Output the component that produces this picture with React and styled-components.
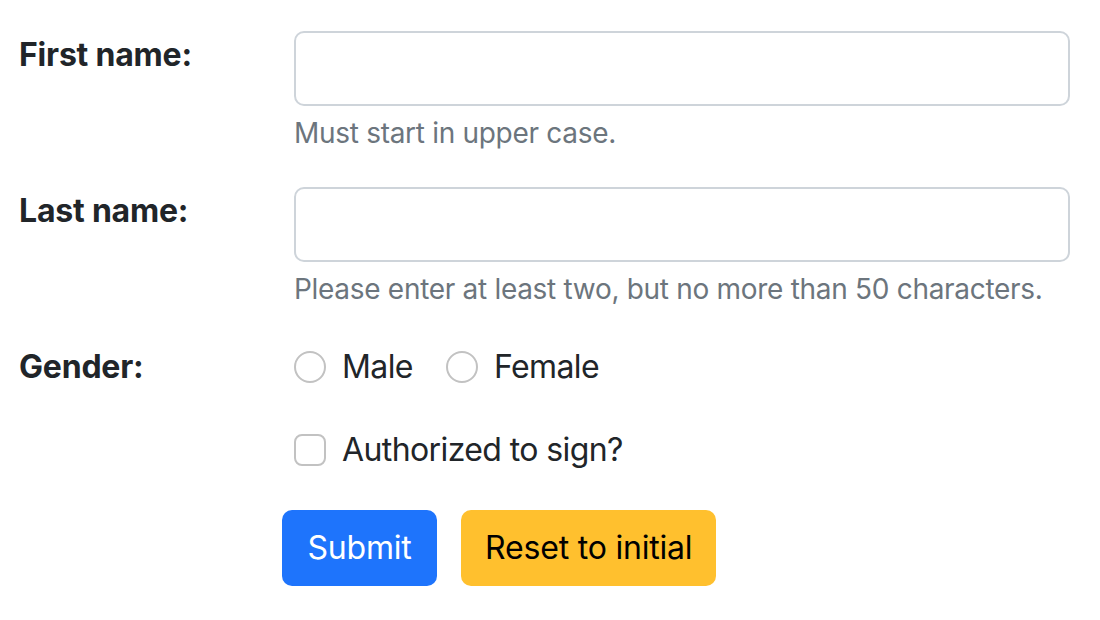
import styled, { createGlobalStyle } from "styled-components";

const GlobalStyle = createGlobalStyle`
  body {
    margin: 0;
    background: #fff;
    color: #212529;
    font-family: Inter, "Liberation Sans", sans-serif;
  }
`;

const Formulario = styled.form`
  padding: 31px 30px 0 19px;
`;

const Linha = styled.div`
  display: grid;
  grid-template-columns: 275px 1fr;
  margin-bottom: ${(p) => p.$gap || 31}px;
`;

const Rotulo = styled.label`
  font-size: 32px;
  font-weight: 700;
  line-height: 47px;
  letter-spacing: -0.2px;
`;

const Campo = styled.input`
  display: block;
  box-sizing: border-box;
  width: 100%;
  height: 75px;
  border: 2px solid #ced4da;
  border-radius: 10px;
  background: #fff;
  font-size: 32px;
  padding: 0 24px;
  outline: none;
`;

const Ajuda = styled.div`
  margin-top: 6px;
  margin-bottom: 2px;
  font-size: 28px;
  line-height: 42px;
  letter-spacing: -0.3px;
  color: #6c757d;
`;

const Opcoes = styled.div`
  display: flex;
  align-items: center;
  gap: 33px;
  height: 48px;
`;

const Opcao = styled.label`
  display: flex;
  align-items: center;
  gap: 16px;
  font-size: 32px;
  line-height: 48px;
  letter-spacing: -0.6px;
`;

const Marcador = styled.input`
  appearance: none;
  margin: 0;
  width: 32px;
  height: 32px;
  border: 2px solid #c2c2c2;
  border-radius: ${(p) => (p.type === "radio" ? "50%" : "8px")};
  background: #fff;
`;

const Botoes = styled.div`
  display: flex;
  gap: 24px;
  padding-left: 263px;
`;

const Botao = styled.button`
  font-family: inherit;
  font-size: 32px;
  line-height: 48px;
  letter-spacing: -0.2px;
  padding: 14px ${(p) => (p.$tipo === "aviso" ? 24 : 25.5)}px;
  border: none;
  border-radius: 10px;
  background: ${(p) => (p.$tipo === "aviso" ? "#ffc02e" : "#1e74fc")};
  color: ${(p) => (p.$tipo === "aviso" ? "#000" : "#fff")};
`;

const App = () => {
  return (
    <>
      <GlobalStyle />
      <Formulario>
        <Linha>
          <Rotulo>First name:</Rotulo>
          <div>
            <Campo type="text" />
            <Ajuda>Must start in upper case.</Ajuda>
          </div>
        </Linha>
        <Linha>
          <Rotulo>Last name:</Rotulo>
          <div>
            <Campo type="text" />
            <Ajuda>Please enter at least two, but no more than 50 characters.</Ajuda>
          </div>
        </Linha>
        <Linha $gap={35}>
          <Rotulo>Gender:</Rotulo>
          <Opcoes>
            <Opcao>
              <Marcador type="radio" name="gender" />
              Male
            </Opcao>
            <Opcao>
              <Marcador type="radio" name="gender" />
              Female
            </Opcao>
          </Opcoes>
        </Linha>
        <Linha $gap={36}>
          <div />
          <Opcoes>
            <Opcao>
              <Marcador type="checkbox" />
              Authorized to sign?
            </Opcao>
          </Opcoes>
        </Linha>
        <Botoes>
          <Botao type="button">Submit</Botao>
          <Botao type="button" $tipo="aviso">Reset to initial</Botao>
        </Botoes>
      </Formulario>
    </>
  );
};

export default App;
